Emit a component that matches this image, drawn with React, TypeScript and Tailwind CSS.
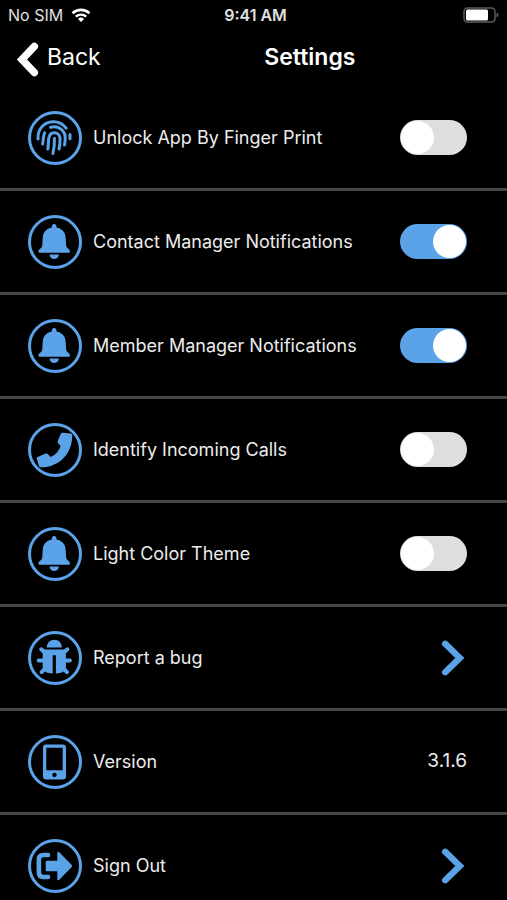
import React, { useState } from "react";

const FingerprintIcon = () => (
  <svg
    viewBox="0 0 54 54"
    className="size-full"
    fill="none"
    stroke="currentColor"
    strokeWidth="3"
    strokeLinecap="round"
    aria-hidden="true"
  >
    <path d="M10 28c-.5-9.500 5.500-17 15-17.300 5.500-.2 10 2.300 13.200 6.500" />
    <path d="M42 23.500v4.200" />
    <path d="M22.500 16.300c8-2 14.500 3 14.700 10.200 0 3-.2 5-.7 7.500" />
    <path d="M16.600 21.800c-1.600 3.400-1 6.500-2 11.200" />
    <path d="M19.800 38c.8-3.500.5-7 .9-10.300.5-3.800 2.700-6 5.700-6s5.400 2.300 5.600 5.800c.2 3.500-.2 7-.9 10.500" />
    <path d="M26.400 27.500c.2 5-.3 10-1.500 15" />
  </svg>
);

const BellIcon = () => (
  <svg viewBox="0 0 54 54" className="size-full" fill="currentColor" aria-hidden="true">
    <path d="M26.200 9c1.400 0 2.300 1 2.300 2.300v1.300c5.800 1.200 8.900 5 9.200 10.300.3 4.700.2 7.400.9 9.200.7 1.700 3.400 2.400 3.400 4.400 0 .8-.3 1.200-1.100 1.200H11.500c-.8 0-1.100-.4-1.100-1.200 0-2 2.700-2.700 3.400-4.400.7-1.800.6-4.500.9-9.200.3-5.300 3.400-9.100 9.200-10.300v-1.300C23.900 10 24.800 9 26.200 9z" />
    <path d="M21.500 39.600h9.400c-.3 2.800-2 4.500-4.700 4.500s-4.400-1.700-4.700-4.500z" />
  </svg>
);

const PhoneIcon = () => (
  <svg viewBox="0 0 54 54" className="size-full" fill="currentColor" aria-hidden="true">
    <path d="M34.800 9.700l7.900.9c1.100.1 1.600.8 1.600 1.800-.2 18-12.600 31.700-31.200 31.900-1.200 0-1.900-.4-2.200-1.500L8.800 36c-.3-1 0-1.700.9-2.100l8-3.300c.9-.4 1.700-.2 2.300.6l2.500 2.900c5-2.400 8.400-6 10.200-11.200l-2.400-2.500c-.7-.7-.9-1.400-.5-2.300l2.900-7.200c.4-.9 1.100-1.300 2.100-1.200z" />
  </svg>
);

const BugIcon = () => (
  <svg viewBox="0 0 54 54" className="size-full" fill="currentColor" aria-hidden="true">
    <path d="M18.800 16.600c.2-4.800 3-7.800 7.500-7.800s7.300 3 7.500 7.800z" />
    <path d="M16.500 18.500h19.600c1 0 1.800.6 1.800 1.600v16.400c0 3.500-4 5.800-10 6V24.300h-3.200v18.200c-6-.2-10-2.500-10-6V20.100c0-1 .8-1.600 1.800-1.600z" />
    <path
      d="M13.200 18.300l4.500 4M39.400 18.300l-4.500 4M10.700 29.500h6M41.900 29.500h-6M13.600 41.200l5-5M39 41.200l-5-5"
      fill="none"
      stroke="currentColor"
      strokeWidth="4"
      strokeLinecap="round"
    />
  </svg>
);

const MobileIcon = () => (
  <svg viewBox="0 0 54 54" className="size-full" fill="currentColor" aria-hidden="true">
    <path
      fillRule="evenodd"
      d="M18 9.400h17a3 3 0 0 1 3 3v29a3 3 0 0 1-3 3H18a3 3 0 0 1-3-3v-29a3 3 0 0 1 3-3zM18.300 12.800v22.500h16.400V12.800zM26.500 37.700a2.200 2.200 0 1 0 0 4.400a2.200 2.200 0 0 0 0-4.400z"
    />
  </svg>
);

const SignOutIcon = () => (
  <svg viewBox="0 0 54 54" className="size-full" fill="currentColor" aria-hidden="true">
    <path
      d="M20 16h-4.700c-2.900 0-4.400 1.500-4.400 4.400v13.200c0 2.900 1.500 4.400 4.400 4.400H20"
      fill="none"
      stroke="currentColor"
      strokeWidth="4.600"
      strokeLinecap="round"
    />
    <path d="M19.200 21.800h10.100v-7.600c0-1.500 1-2 2-1l12.200 12.600c.7.800.7 1.600 0 2.400L31.300 40.800c-1 1-2 .5-2-1v-7.600H19.200c-1 0-1.500-.5-1.500-1.500v-7.400c0-1 .5-1.500 1.500-1.500z" />
  </svg>
);

const ChevronRight = () => (
  <svg viewBox="0 0 26 36" className="h-9 w-[26px]" fill="none" aria-hidden="true">
    <path d="M4.200 3.800L18.800 18 4.200 32.200" stroke="currentColor" strokeWidth="6.400" strokeLinecap="round" />
  </svg>
);

const settings = [
  { title: "Unlock App By Finger Print", icon: <FingerprintIcon />, type: "toggle", on: false },
  { title: "Contact Manager Notifications", icon: <BellIcon />, type: "toggle", on: true },
  { title: "Member Manager Notifications", icon: <BellIcon />, type: "toggle", on: true },
  { title: "Identify Incoming Calls", icon: <PhoneIcon />, type: "toggle", on: false },
  { title: "Light Color Theme", icon: <BellIcon />, type: "toggle", on: false },
  { title: "Report a bug", icon: <BugIcon />, type: "link" },
  { title: "Version", icon: <MobileIcon />, type: "text", value: "3.1.6" },
  { title: "Sign Out", icon: <SignOutIcon />, type: "link" },
];

function RowLabel({ icon, title }: { icon: React.ReactNode; title: string }) {
  return (
    <>
      <span className="relative size-[54px] shrink-0 text-[#5ba3e8]">
        {icon}
        <span className="absolute inset-0 rounded-full border-3 border-[#5ba3e8]" />
      </span>
      <span className="flex-1 text-lg">{title}</span>
    </>
  );
}

function ToggleRow({ icon, title, on }: { icon: React.ReactNode; title: string; on: boolean }) {
  const [checked, setChecked] = useState(on);

  return (
    <label className="flex h-[101px] items-center gap-[11px] pr-10 pl-7">
      <RowLabel icon={icon} title={title} />
      <input
        type="checkbox"
        role="switch"
        checked={checked}
        onChange={(e) => setChecked(e.target.checked)}
        className="flex h-[35px] w-[67px] shrink-0 appearance-none items-center rounded-full bg-[#dedede] px-px before:size-[33px] before:rounded-full before:bg-white checked:justify-end checked:bg-[#5ba3e8]"
      />
    </label>
  );
}

function StatusBar() {
  return (
    <div className="grid h-7 grid-cols-3 items-center px-2 pt-0.5 text-base text-[#e0e0e0]">
      <div className="flex items-center gap-2">
        No SIM
        <svg viewBox="0 0 20 15" className="h-[15px] w-5" fill="none" aria-hidden="true">
          <path d="M1.500 5.200a12.500 12.500 0 0 1 17 0" stroke="white" strokeWidth="2.600" />
          <path d="M4.800 8.700a7.600 7.600 0 0 1 10.400 0" stroke="white" strokeWidth="2.400" />
          <path d="M10 14l-3-3a4.300 4.300 0 0 1 6 0z" fill="white" />
        </svg>
      </div>
      <p className="pl-1 text-center font-semibold">9:41 AM</p>
      <svg viewBox="0 0 36 16" className="h-4 w-9 justify-self-end" aria-hidden="true">
        <rect x="1" y="1" width="31" height="14" rx="3.500" fill="none" stroke="#5c5c5c" strokeWidth="1.500" />
        <rect x="3" y="2.500" width="22" height="11" rx="1.500" fill="white" />
        <path d="M33.500 5.500c2.500 1 2.500 4 0 5z" fill="#5c5c5c" />
      </svg>
    </div>
  );
}

export default function App() {
  return (
    <div className="flex h-screen flex-col bg-black font-['Inter','Liberation_Sans',sans-serif] text-[#ececec]">
      <StatusBar />

      <header className="flex h-[59px] shrink-0 items-center gap-3 pl-4 text-white">
        <button type="button" className="flex items-center gap-[7px] text-[23px]">
          <svg viewBox="0 0 24 40" className="h-10 w-6" fill="none" aria-hidden="true">
            <path d="M18.300 8.500L6 21.500l12.300 13" stroke="white" strokeWidth="7.500" strokeLinecap="round" />
          </svg>
          Back
        </button>
        <h1 className="flex-1 text-center text-[23px] font-semibold">Settings</h1>
      </header>

      <main className="min-h-0 flex-1 overflow-y-auto [scrollbar-width:none]">
        <ul className="divide-y-3 divide-[#454545]">
          {settings.map((item) => (
            <li key={item.title}>
              {item.type === "toggle" && (
                <ToggleRow icon={item.icon} title={item.title} on={!!item.on} />
              )}
              {item.type === "link" && (
                <a href="#" className="flex h-[101px] items-center gap-[11px] pr-10 pl-7">
                  <RowLabel icon={item.icon} title={item.title} />
                  <span className="text-[#5ba3e8]">
                    <ChevronRight />
                  </span>
                </a>
              )}
              {item.type === "text" && (
                <div className="flex h-[101px] items-center gap-[11px] pr-10 pl-7">
                  <RowLabel icon={item.icon} title={item.title} />
                  <span className="text-[19px]">{item.value}</span>
                </div>
              )}
            </li>
          ))}
        </ul>
      </main>
    </div>
  );
}
